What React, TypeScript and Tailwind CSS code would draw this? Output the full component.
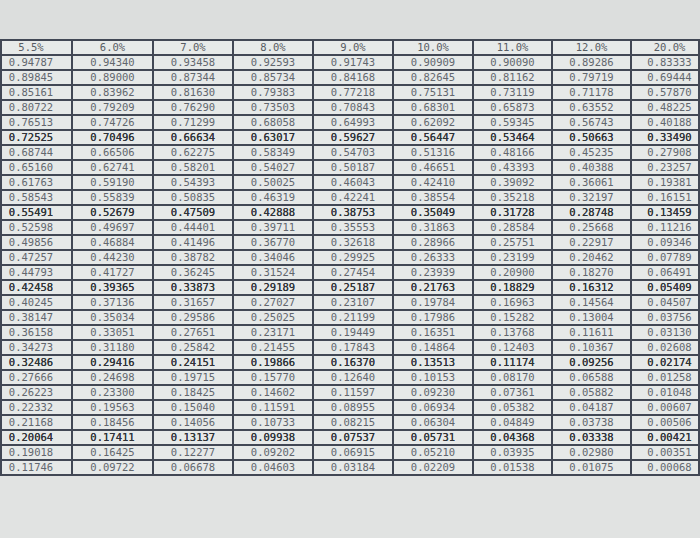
const headers = ["5.5%", "6.0%", "7.0%", "8.0%", "9.0%", "10.0%", "11.0%", "12.0%", "20.0%"];

// present value factors, one row per period
const rows: string[][] = [
  ["0.94787", "0.94340", "0.93458", "0.92593", "0.91743", "0.90909", "0.90090", "0.89286", "0.83333"],
  ["0.89845", "0.89000", "0.87344", "0.85734", "0.84168", "0.82645", "0.81162", "0.79719", "0.69444"],
  ["0.85161", "0.83962", "0.81630", "0.79383", "0.77218", "0.75131", "0.73119", "0.71178", "0.57870"],
  ["0.80722", "0.79209", "0.76290", "0.73503", "0.70843", "0.68301", "0.65873", "0.63552", "0.48225"],
  ["0.76513", "0.74726", "0.71299", "0.68058", "0.64993", "0.62092", "0.59345", "0.56743", "0.40188"],
  ["0.72525", "0.70496", "0.66634", "0.63017", "0.59627", "0.56447", "0.53464", "0.50663", "0.33490"],
  ["0.68744", "0.66506", "0.62275", "0.58349", "0.54703", "0.51316", "0.48166", "0.45235", "0.27908"],
  ["0.65160", "0.62741", "0.58201", "0.54027", "0.50187", "0.46651", "0.43393", "0.40388", "0.23257"],
  ["0.61763", "0.59190", "0.54393", "0.50025", "0.46043", "0.42410", "0.39092", "0.36061", "0.19381"],
  ["0.58543", "0.55839", "0.50835", "0.46319", "0.42241", "0.38554", "0.35218", "0.32197", "0.16151"],
  ["0.55491", "0.52679", "0.47509", "0.42888", "0.38753", "0.35049", "0.31728", "0.28748", "0.13459"],
  ["0.52598", "0.49697", "0.44401", "0.39711", "0.35553", "0.31863", "0.28584", "0.25668", "0.11216"],
  ["0.49856", "0.46884", "0.41496", "0.36770", "0.32618", "0.28966", "0.25751", "0.22917", "0.09346"],
  ["0.47257", "0.44230", "0.38782", "0.34046", "0.29925", "0.26333", "0.23199", "0.20462", "0.07789"],
  ["0.44793", "0.41727", "0.36245", "0.31524", "0.27454", "0.23939", "0.20900", "0.18270", "0.06491"],
  ["0.42458", "0.39365", "0.33873", "0.29189", "0.25187", "0.21763", "0.18829", "0.16312", "0.05409"],
  ["0.40245", "0.37136", "0.31657", "0.27027", "0.23107", "0.19784", "0.16963", "0.14564", "0.04507"],
  ["0.38147", "0.35034", "0.29586", "0.25025", "0.21199", "0.17986", "0.15282", "0.13004", "0.03756"],
  ["0.36158", "0.33051", "0.27651", "0.23171", "0.19449", "0.16351", "0.13768", "0.11611", "0.03130"],
  ["0.34273", "0.31180", "0.25842", "0.21455", "0.17843", "0.14864", "0.12403", "0.10367", "0.02608"],
  ["0.32486", "0.29416", "0.24151", "0.19866", "0.16370", "0.13513", "0.11174", "0.09256", "0.02174"],
  ["0.27666", "0.24698", "0.19715", "0.15770", "0.12640", "0.10153", "0.08170", "0.06588", "0.01258"],
  ["0.26223", "0.23300", "0.18425", "0.14602", "0.11597", "0.09230", "0.07361", "0.05882", "0.01048"],
  ["0.22332", "0.19563", "0.15040", "0.11591", "0.08955", "0.06934", "0.05382", "0.04187", "0.00607"],
  ["0.21168", "0.18456", "0.14056", "0.10733", "0.08215", "0.06304", "0.04849", "0.03738", "0.00506"],
  ["0.20064", "0.17411", "0.13137", "0.09938", "0.07537", "0.05731", "0.04368", "0.03338", "0.00421"],
  ["0.19018", "0.16425", "0.12277", "0.09202", "0.06915", "0.05210", "0.03935", "0.02980", "0.00351"],
  ["0.11746", "0.09722", "0.06678", "0.04603", "0.03184", "0.02209", "0.01538", "0.01075", "0.00068"],
];

const cellPad = (i: number) => (i === 0 ? "pr-[11px]" : i === 8 ? "pl-[9px]" : "");

const App = () => {
  return (
    <div className="w-[700px] h-[538px] overflow-hidden bg-[#dcdedd] pt-[39px] font-['DejaVu_Sans_Mono',monospace]">
      <div className="grid grid-cols-[69px_79px_78px_78px_78px_78px_77px_77px_66px] gap-[2px] border-2 border-[#424855] bg-[#424855]">
        {headers.map((h, i) => (
          <div
            key={h}
            className={`h-[13px] bg-[#e7eae9] text-center text-[10.5px] leading-[13px] text-[#575c63] ${cellPad(i)}`}
          >
            {h}
          </div>
        ))}
        {rows.map((row, r) => {
          // every fifth row shows up darker in the print
          const strong = r % 5 === 0 && r > 0;
          return row.map((v, i) => (
            <div
              key={`${r}-${i}`}
              className={`h-[13px] bg-[#e6e9e8] text-center text-[10.5px] leading-[13px] ${cellPad(i)} ${
                strong ? "text-[#2f3338] [text-shadow:0_0_0.4px_#2f3338]" : "text-[#62676e]"
              }`}
            >
              {v}
            </div>
          ));
        })}
      </div>
      <div className="h-[70px] bg-[#e1e3e2]" />
    </div>
  );
};

export default App;
